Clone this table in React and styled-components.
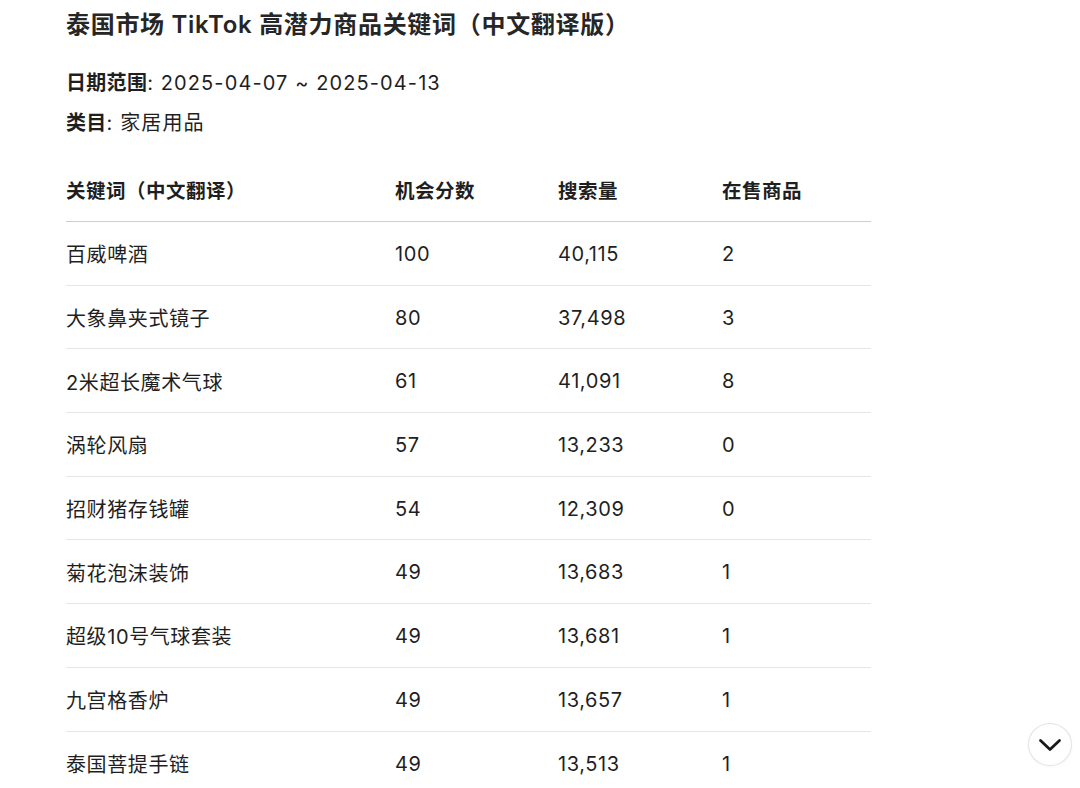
import React from "react";
import styled, { createGlobalStyle } from "styled-components";

const Global = createGlobalStyle`
  html, body { margin: 0; padding: 0; background: #fff; }
  body {
    font-family: Inter, "Noto Sans CJK SC", "Noto Sans", sans-serif;
    color: #1f1f1f;
    -webkit-font-smoothing: antialiased;
  }
`;

const Page = styled.div`
  position: relative;
  width: 1080px;
  height: 788px;
  overflow: hidden;
  box-sizing: border-box;
  padding: 7px 0 0 66px;
`;

const Title = styled.h1`
  margin: 0;
  font-size: 24px;
  line-height: 36px;
  font-weight: 600;
  letter-spacing: 0.7px;
  color: #262626;
`;

const Meta = styled.div`
  margin-top: 20px;
  font-size: 20px;
  line-height: 40px;
  letter-spacing: 1.1px;
`;

const Label = styled.strong`
  font-weight: 600;
  letter-spacing: 0.3px;
`;

const Table = styled.div`
  margin-top: 15px;
  width: 805px;
  display: grid;
  grid-template-columns: 329px 163px 164px 149px;
  letter-spacing: 0.6px;
`;

const HeadCell = styled.div`
  height: 64px;
  display: flex;
  align-items: center;
  font-size: 19.5px;
  font-weight: 600;
  letter-spacing: 0.5px;
  border-bottom: 1.5px solid #cfcfcf;
  box-sizing: border-box;
`;

const Cell = styled.div`
  height: 63.7px;
  display: flex;
  align-items: center;
  padding-top: 1px;
  font-size: 20px;
  border-bottom: ${(p) => (p.$last ? "none" : "1px solid #e6e6e6")};
  box-sizing: border-box;
`;

const ScrollButton = styled.button`
  position: absolute;
  left: 1028px;
  top: 723px;
  width: 44px;
  height: 43px;
  border-radius: 50%;
  border: 1px solid #e3e3e3;
  background: #fff;
  display: flex;
  align-items: center;
  justify-content: center;
  padding: 0;
  box-shadow: 0 1px 3px rgba(0,0,0,0.04);
`;

const rows = [
  ["百威啤酒", "100", "40,115", "2"],
  ["大象鼻夹式镜子", "80", "37,498", "3"],
  ["2米超长魔术气球", "61", "41,091", "8"],
  ["涡轮风扇", "57", "13,233", "0"],
  ["招财猪存钱罐", "54", "12,309", "0"],
  ["菊花泡沫装饰", "49", "13,683", "1"],
  ["超级10号气球套装", "49", "13,681", "1"],
  ["九宫格香炉", "49", "13,657", "1"],
  ["泰国菩提手链", "49", "13,513", "1"],
];

export default function App() {
  return (
    <Page>
      <Global />
      <Title>泰国市场 TikTok 高潜力商品关键词（中文翻译版）</Title>
      <Meta>
        <div>
          <Label>日期范围</Label>: 2025-04-07 ~ 2025-04-13
        </div>
        <div>
          <Label>类目</Label>: 家居用品
        </div>
      </Meta>
      <Table>
        <HeadCell>关键词（中文翻译）</HeadCell>
        <HeadCell>机会分数</HeadCell>
        <HeadCell>搜索量</HeadCell>
        <HeadCell>在售商品</HeadCell>
        {rows.map((r, i) =>
          r.map((c, j) => (
            <Cell key={`${i}-${j}`} $last={i === rows.length - 1}>
              {c}
            </Cell>
          ))
        )}
      </Table>
      <ScrollButton aria-label="scroll down">
        <svg width="24" height="14" viewBox="0 0 24 14" fill="none" stroke="#1a1a1a" strokeWidth="2.8" strokeLinecap="round" strokeLinejoin="round">
          <path d="M2.5 2.5l9.5 9 9.5-9" />
        </svg>
      </ScrollButton>
    </Page>
  );
}
